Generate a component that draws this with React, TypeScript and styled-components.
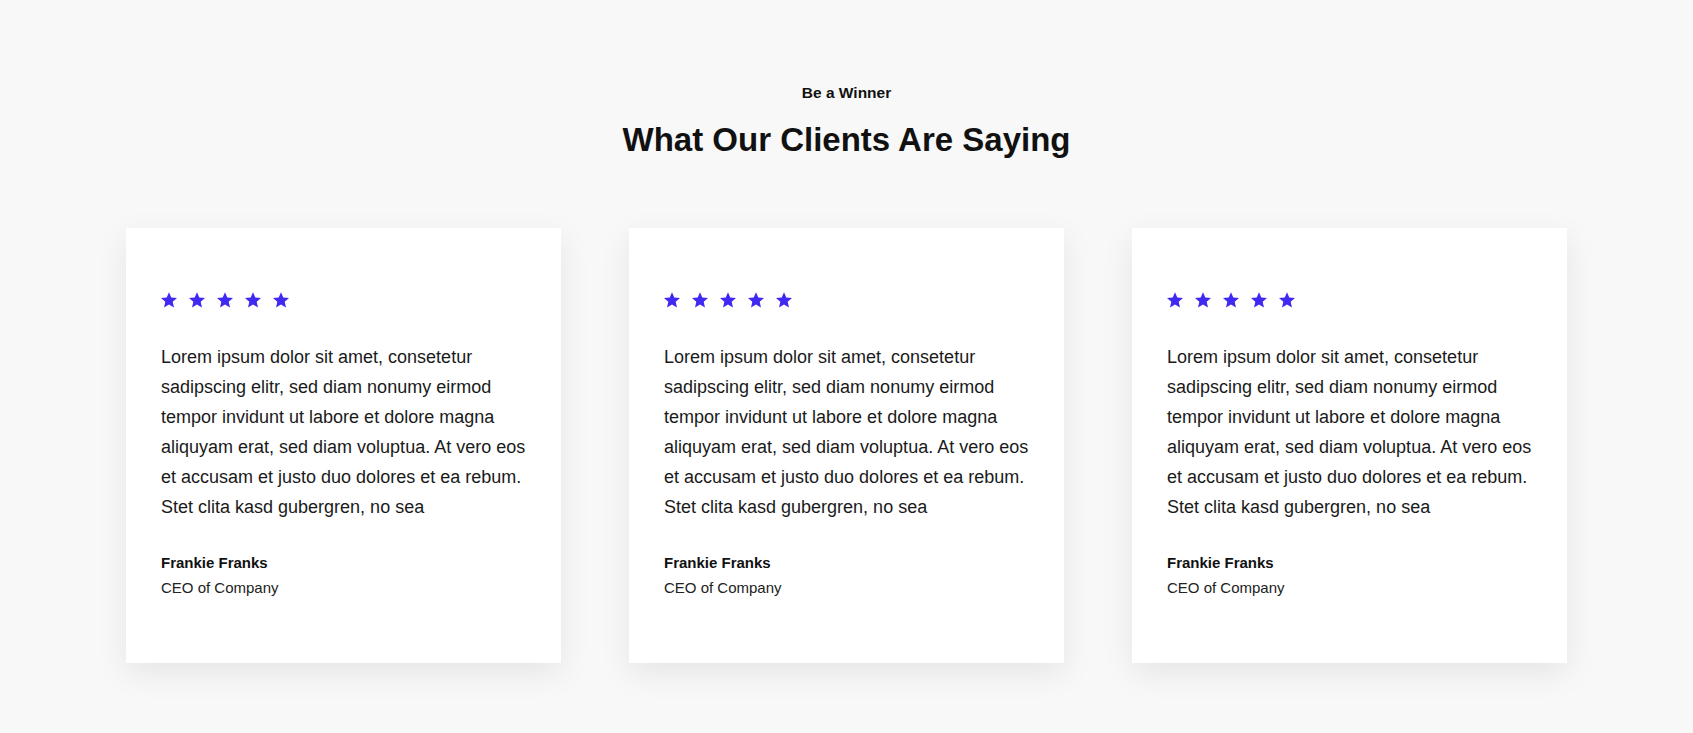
import { FC } from "react";
import styled, { createGlobalStyle } from "styled-components";

const GlobalStyle = createGlobalStyle`
  body {
    margin: 0;
    background: #f8f8f8;
    font-family: "Liberation Sans", Arial, sans-serif;
    color: #111;
  }
`;

const Section = styled.section`
  display: flex;
  flex-direction: column;
  align-items: center;
  padding: 84px 0 70px;
`;

const Eyebrow = styled.div`
  font-size: 15.5px;
  line-height: 18px;
  font-weight: 700;
`;

const Title = styled.h2`
  margin: 19px 0 0;
  font-size: 33px;
  line-height: 38px;
  font-weight: 700;
`;

const Grid = styled.div`
  margin-top: 69px;
  width: 1441px;
  display: grid;
  grid-template-columns: repeat(3, 1fr);
  gap: 68px;
`;

const Card = styled.article`
  background: #fff;
  padding: 64px 35px 63px;
  box-shadow: 0 10px 30px rgba(0, 0, 0, 0.08);
`;

const Stars = styled.div`
  display: flex;
  gap: 12px;
  height: 16px;
`;

const Quote = styled.p`
  margin: 34px 0 0;
  font-size: 18px;
  line-height: 30px;
  color: #1a1a1a;
`;

const Name = styled.div`
  margin-top: 28px;
  font-size: 15px;
  line-height: 25px;
  font-weight: 700;
`;

const Role = styled.div`
  font-size: 15px;
  line-height: 25px;
  color: #222;
`;

const Star: FC = () => (
  <svg width="16" height="16" viewBox="1.2 1.2 21.6 21.6">
    <path
      fill="#4029f0"
      d="M12 1.5l3.1 7.1 7.7.7-5.8 5.1 1.7 7.6L12 18l-6.7 4 1.7-7.6-5.8-5.1 7.7-.7z"
    />
  </svg>
);

const quote =
  "Lorem ipsum dolor sit amet, consetetur sadipscing elitr, sed diam nonumy eirmod tempor invidunt ut labore et dolore magna aliquyam erat, sed diam voluptua. At vero eos et accusam et justo duo dolores et ea rebum. Stet clita kasd gubergren, no sea";

const testimonials = [
  { name: "Frankie Franks", role: "CEO of Company", text: quote },
  { name: "Frankie Franks", role: "CEO of Company", text: quote },
  { name: "Frankie Franks", role: "CEO of Company", text: quote },
];

export default function App() {
  return (
    <>
      <GlobalStyle />
      <Section>
        <Eyebrow>Be a Winner</Eyebrow>
        <Title>What Our Clients Are Saying</Title>
        <Grid>
          {testimonials.map((t, i) => (
            <Card key={i}>
              <Stars>
                {[0, 1, 2, 3, 4].map((s) => (
                  <Star key={s} />
                ))}
              </Stars>
              <Quote>{t.text}</Quote>
              <Name>{t.name}</Name>
              <Role>{t.role}</Role>
            </Card>
          ))}
        </Grid>
      </Section>
    </>
  );
}
